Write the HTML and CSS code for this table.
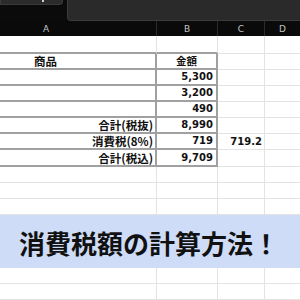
FILE: index.html
```html
<!DOCTYPE html>
<html lang="ja">
<head>
<meta charset="utf-8">
<link rel="stylesheet" href="styles.css">
</head>
<body>
<div class="app">
  <div class="chrome">
    <div class="namebox"><span class="caret"></span></div>
    <div class="formula"></div>
  </div>
  <div class="colhead">
    <div class="ch ch-a">A</div>
    <div class="ch ch-b">B</div>
    <div class="ch ch-c">C</div>
    <div class="ch ch-d">D</div>
  </div>
  <div class="sheet">
    <div class="row r18"><div class="c a tb"></div><div class="c b tb"></div><div class="c cc"></div><div class="c d"></div></div>
    <div class="row"><div class="c a t ctr">商品</div><div class="c b t ctr">金額</div><div class="c cc"></div><div class="c d"></div></div>
    <div class="row"><div class="c a t"></div><div class="c b t num">5,300</div><div class="c cc"></div><div class="c d"></div></div>
    <div class="row"><div class="c a t"></div><div class="c b t num">3,200</div><div class="c cc"></div><div class="c d"></div></div>
    <div class="row"><div class="c a t"></div><div class="c b t num">490</div><div class="c cc"></div><div class="c d"></div></div>
    <div class="row"><div class="c a t lbl">合計(税抜)</div><div class="c b t num">8,990</div><div class="c cc"></div><div class="c d"></div></div>
    <div class="row"><div class="c a t lbl">消費税(8%)</div><div class="c b t num">719</div><div class="c cc num">719.2</div><div class="c d"></div></div>
    <div class="row r17"><div class="c a t lbl">合計(税込)</div><div class="c b t num">9,709</div><div class="c cc"></div><div class="c d"></div></div>
    <div class="row"><div class="c a"></div><div class="c b"></div><div class="c cc"></div><div class="c d"></div></div>
    <div class="row"><div class="c a"></div><div class="c b"></div><div class="c cc"></div><div class="c d"></div></div>
    <div class="row"><div class="c a"></div><div class="c b"></div><div class="c cc"></div><div class="c d"></div></div>
    <div class="banner">消費税額の計算方法！</div>
    <div class="row"><div class="c a"></div><div class="c b"></div><div class="c cc"></div><div class="c d"></div></div>
    <div class="row"><div class="c a"></div><div class="c b"></div><div class="c cc"></div><div class="c d"></div></div>
  </div>
</div>
</body>
</html>
```

FILE: styles.css
```css
* { box-sizing: border-box; }
html, body {
  margin: 0;
  padding: 0;
  width: 300px;
  height: 300px;
  overflow: hidden;
  background: #ffffff;
}
.app {
  width: 300px;
  height: 300px;
  overflow: hidden;
  display: flex;
  flex-direction: column;
}
.chrome {
  height: 22px;
  background: #0b0b0b;
  display: flex;
  align-items: flex-start;
  gap: 4px;
}
.namebox {
  width: 63px;
  height: 5px;
  background: #2b2b2b;
  border: 1px solid #3b3b3b;
  border-top: none;
  border-radius: 0 0 4px 0;
  display: flex;
  justify-content: center;
}
.caret {
  display: block;
  width: 2px;
  height: 2px;
  margin-left: 22px;
  background: #d0d0d0;
}
.formula {
  flex: 1;
  height: 21px;
  margin-right: -6px;
  background: #2a2a2a;
  border: 1px solid #3c3c3c;
  border-top: none;
  border-radius: 0 0 4px 4px;
}
.colhead {
  height: 20px;
  background: #0a0a0a;
  display: grid;
  grid-template-columns: 157px 61px 47px 1fr;
  font-family: "DejaVu Sans", "Noto Sans", sans-serif;
  font-size: 9px;
  color: #c4c4c4;
}
.ch {
  display: flex;
  align-items: center;
  justify-content: center;
  border-right: 1px solid #2c2c2c;
}
.ch-a { padding-right: 64px; }
.ch-d { border-right: none; }
.sheet {
  flex: 1;
  display: flex;
  flex-direction: column;
}
.row {
  height: 16px;
  flex: none;
  display: grid;
  grid-template-columns: 157px 61px 47px 1fr;
}
.row.r18 { height: 18px; }
.row.r17 { height: 17px; }
.c {
  border-right: 1px solid #e3e3e3;
  border-bottom: 1px solid #e3e3e3;
  display: flex;
  align-items: center;
  font-family: "Noto Sans CJK JP", "Noto Sans", sans-serif;
  font-weight: bold;
  font-size: 11.5px;
  color: #111111;
  line-height: 14px;
  white-space: nowrap;
}
.c.d { border-right: none; }
.c.tb { border-bottom: 2px solid #a0a0a0; }
.c.t {
  border-bottom: 2px solid #a0a0a0;
  border-right: 2px solid #a0a0a0;
}
.c.ctr { justify-content: center; }
.c.a.ctr { padding-right: 64px; }
.c.b.ctr { font-size: 10.5px; }
.c.lbl {
  justify-content: flex-end;
  padding-right: 2px;
}
.c.num {
  justify-content: flex-end;
  padding-right: 3px;
  font-family: "DejaVu Sans", "Noto Sans", sans-serif;
  font-size: 10px;
}
.c.cc.num { padding-right: 2px; }
.banner {
  height: 53px;
  flex: none;
  background: #cedcf7;
  display: flex;
  align-items: center;
  padding-left: 19px;
  padding-top: 2px;
  font-family: "Noto Sans CJK JP", sans-serif;
  font-weight: bold;
  font-size: 26px;
  color: #111111;
  letter-spacing: 0;
  white-space: nowrap;
}
```
